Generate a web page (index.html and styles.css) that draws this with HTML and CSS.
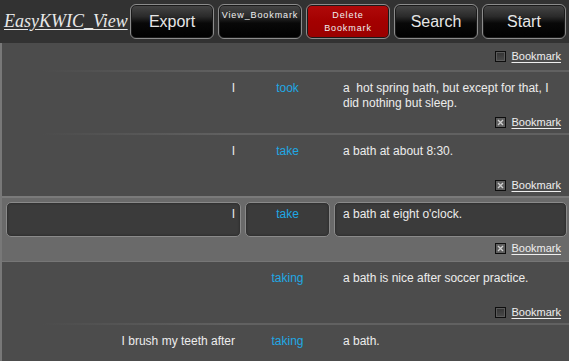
FILE: index.html
```html
<!DOCTYPE html>
<html lang="en">
<head>
  <meta charset="UTF-8" />
  <meta name="viewport" content="width=device-width, initial-scale=1.0"/>
  <title>EasyKWIC_View</title>
  <link rel="stylesheet" href="styles.css">
</head>
<body>
  <header class="toolbar">
    <span class="app-title">EasyKWIC_View</span>
    <button class="tool-btn">Export</button>
    <button class="tool-btn small">View_Bookmark</button>
    <button class="tool-btn small danger">Delete<br>Bookmark</button>
    <button class="tool-btn">Search</button>
    <button class="tool-btn">Start</button>
  </header>

  <main class="results">
    <div class="row cut">
      <div class="bm">
        <span class="check"></span>
        <span class="bm-label">Bookmark</span>
      </div>
    </div>
    <div class="sep"></div>

    <div class="row">
      <div class="cells">
        <div class="cell left">I</div>
        <div class="cell key">took</div>
        <div class="cell right">a&nbsp; hot spring bath, but except for that, I did nothing but sleep.</div>
      </div>
      <div class="bm">
        <span class="check on"><svg viewBox="0 0 9 9"><path d="M2 2L7 7M7 2L2 7"/></svg></span>
        <span class="bm-label">Bookmark</span>
      </div>
    </div>
    <div class="sep"></div>

    <div class="row">
      <div class="cells">
        <div class="cell left">I</div>
        <div class="cell key">take</div>
        <div class="cell right">a bath at about 8:30.</div>
      </div>
      <div class="bm">
        <span class="check on"><svg viewBox="0 0 9 9"><path d="M2 2L7 7M7 2L2 7"/></svg></span>
        <span class="bm-label">Bookmark</span>
      </div>
    </div>

    <div class="row selected">
      <div class="cells">
        <div class="cell left">I</div>
        <div class="cell key">take</div>
        <div class="cell right">a bath at eight o'clock.</div>
      </div>
      <div class="bm">
        <span class="check on"><svg viewBox="0 0 9 9"><path d="M2 2L7 7M7 2L2 7"/></svg></span>
        <span class="bm-label">Bookmark</span>
      </div>
    </div>

    <div class="row">
      <div class="cells">
        <div class="cell left"></div>
        <div class="cell key">taking</div>
        <div class="cell right">a bath is nice after soccer practice.</div>
      </div>
      <div class="bm">
        <span class="check"></span>
        <span class="bm-label">Bookmark</span>
      </div>
    </div>
    <div class="sep"></div>

    <div class="row">
      <div class="cells">
        <div class="cell left">I brush my teeth after</div>
        <div class="cell key">taking</div>
        <div class="cell right">a bath.</div>
      </div>
    </div>
  </main>
</body>
</html>
```

FILE: styles.css
```css
html, body {
  margin: 0;
  height: 361px;
  overflow: hidden;
}

body {
  font-family: "Liberation Sans", Arial, sans-serif;
  background-color: #4c4c4c;
  color: #ececec;
}

.toolbar {
  display: flex;
  align-items: center;
  gap: 4px;
  height: 43px;
  box-sizing: border-box;
  padding: 4px 3px 4px 4px;
  background-color: #323232;
}

.app-title {
  width: 122px;
  font-family: "Liberation Serif", "Times New Roman", serif;
  font-style: italic;
  font-size: 18px;
  color: #e8e8e8;
  text-decoration: underline;
  text-underline-offset: 2px;
  white-space: nowrap;
}

.tool-btn {
  flex: 1;
  height: 35px;
  padding: 0;
  font-family: "Liberation Sans", Arial, sans-serif;
  font-size: 16px;
  color: #e6e6e6;
  border: 1px solid #8c8c8c;
  border-radius: 6px;
  background: linear-gradient(to bottom, #474747 0%, #2a2a2a 35%, #080808 55%, #000 100%);
  box-shadow: inset 0 0 0 1px #1a1a1a;
  cursor: pointer;
}

.tool-btn.small {
  align-self: stretch;
  display: flex;
  justify-content: center;
  align-items: flex-start;
  padding-top: 4px;
  font-size: 9px;
  line-height: 13px;
  letter-spacing: 0.9px;
  text-align: center;
  color: #f0f0f0;
}

.tool-btn.danger {
  background: linear-gradient(to bottom, #b00a0a 0%, #a30000 50%, #9a0000 100%);
}

.results {
  border-left: 2px solid #787878;
  height: 318px;
  overflow: hidden;
}

.row {
  padding: 4px 2px 5px 4px;
}

.row.cut {
  padding-top: 7px;
  padding-bottom: 8px;
}

.row.selected {
  background-color: #6a6a6a;
  border-top: 2px solid #7a7a7a;
  border-bottom: 1px solid #767676;
  padding-bottom: 7px;
}

.cells {
  display: grid;
  grid-template-columns: 235px 85px 1fr;
  column-gap: 4px;
}

.cell {
  height: 35px;
  box-sizing: border-box;
  padding: 4px 5px;
  font-size: 12px;
  line-height: 15px;
  border: 1px solid transparent;
  border-radius: 5px;
}

.selected .cell {
  background-color: #3b3b3b;
  border-color: #8a8a8a;
  box-shadow: inset 0 0 3px rgba(0, 0, 0, 0.4);
}

.cell.left {
  text-align: right;
}

.cell.key {
  text-align: center;
  color: #1fa8e4;
}

.cell.right {
  padding-left: 8px;
  padding-right: 8px;
}

.bm {
  display: flex;
  justify-content: flex-end;
  align-items: center;
  gap: 5px;
  height: 12px;
  margin-top: 5px;
  padding-right: 6px;
}

.cut .bm {
  margin-top: 0;
}

.check {
  width: 11px;
  height: 11px;
  box-sizing: border-box;
  border: 1px solid #0e0e0e;
  background: linear-gradient(to bottom, #333, #4a4a4a);
  box-shadow: inset 0 0 0 1px #5a5a5a;
}

.check.on {
  background: #5e5e5e;
  box-shadow: none;
}

.check svg {
  display: block;
  width: 9px;
  height: 9px;
  stroke: #cfcfcf;
  stroke-width: 1.4;
}

.bm-label {
  font-size: 11px;
  line-height: 12px;
  color: #eeeeee;
  text-decoration: underline;
  text-underline-offset: 2px;
}

.sep {
  height: 2px;
  background: linear-gradient(to right, rgba(110, 110, 110, 0) 40px, #616161 230px);
}
```
